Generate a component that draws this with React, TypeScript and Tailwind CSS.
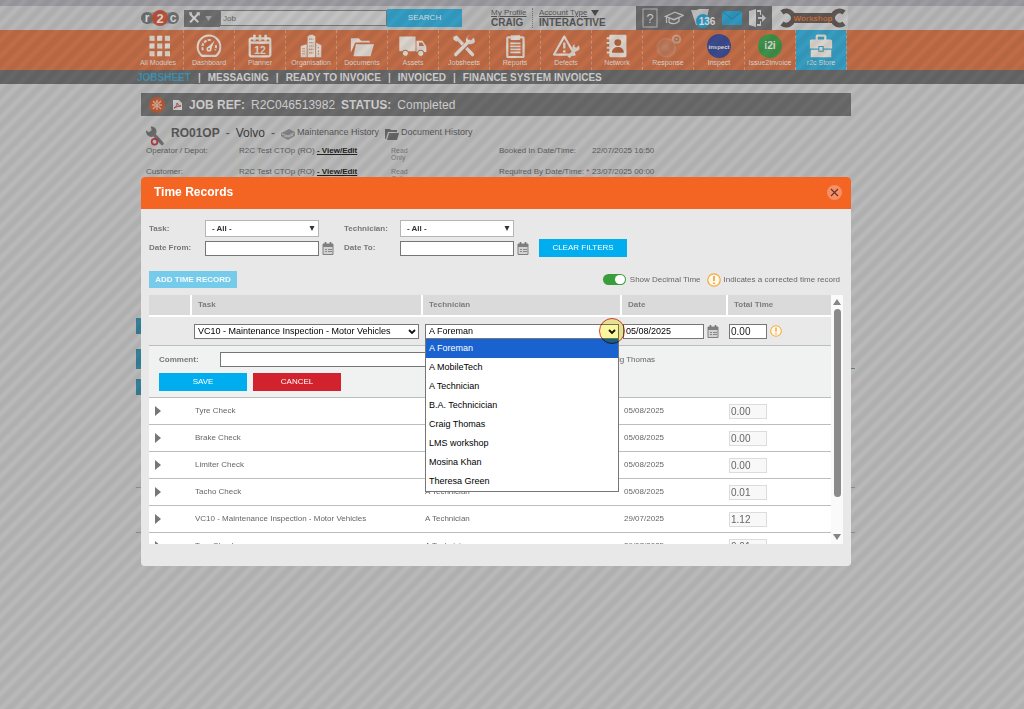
import React from "react";

type IconProps = { className?: string };

const INK = "#dad3cc";

function Svg({ children, box = "0 0 32 28", className = "h-6 w-8" }: { children: React.ReactNode; box?: string; className?: string }) {
  return (
    <svg viewBox={box} className={className} fill="none" aria-hidden="true">
      {children}
    </svg>
  );
}

function GridIcon() {
  return (
    <Svg>
      {[3, 12, 21].map((y) =>
        [6, 15, 24].map((x) => <rect key={`${x}-${y}`} x={x} y={y - 1} width="6" height="6" fill={INK} />)
      )}
    </Svg>
  );
}

function GaugeIcon() {
  return (
    <Svg>
      <path d="M8 25.5A13.2 13.2 0 1 1 24 25.5Z" stroke={INK} strokeWidth="2.400" />
      <path d="M9 19A8.500 8.500 0 0 1 19.500 7.500M24 13A8.500 8.500 0 0 1 23 19" stroke={INK} strokeWidth="2.400" strokeDasharray="3.500 1.300" />
      <path d="M14 16 22.500 7.500 18 19Z" fill={INK} />
      <circle cx="16" cy="17.500" r="3" fill={INK} />
      <circle cx="16" cy="17.500" r="1.200" fill="#b96d49" />
    </Svg>
  );
}

function PlannerIcon() {
  return (
    <Svg>
      <rect x="4" y="5" width="24" height="21" rx="2" stroke={INK} strokeWidth="2.600" />
      <path d="M4 10h24" stroke={INK} strokeWidth="3" />
      <path d="M9.500 1v7M16 1v7M22.500 1v7" stroke={INK} strokeWidth="3" />
      <text x="16" y="23" textAnchor="middle" fontSize="12" fontWeight="700" fontFamily="Liberation Sans, sans-serif" fill={INK}>12</text>
    </Svg>
  );
}

function BuildingsIcon() {
  return (
    <Svg>
      <path d="M4 27V14l7-2v15ZM12 27V3l3-2h3l3 2v24ZM22 27V10l6 3v14Z" fill={INK} />
      <path d="M6 17h3M6 20h3M6 23h3M14 6h5M14 10h5M14 14h5M14 18h5M14 22h5M24 16h2M24 20h2M24 23h2" stroke="#b96d49" strokeWidth="1.300" strokeDasharray="1.300 1" />
    </Svg>
  );
}

function FolderIcon() {
  return (
    <Svg>
      <path d="M3 22V5h9l3 3h10v2H8Z" fill={INK} />
      <path d="M9 12h21l-4 14H6Z" fill={INK} />
    </Svg>
  );
}

function TruckIcon() {
  return (
    <Svg>
      <path d="M0 3h19v17H0zM20 8h7l4.500 6v7H20Z" fill={INK} />
      <path d="M23 10h3.500l2.500 4h-6Z" fill="#b96d49" />
      <circle cx="7" cy="22.500" r="3.600" fill={INK} stroke="#b96d49" strokeWidth="1.200" />
      <circle cx="25" cy="22.500" r="3.600" fill={INK} stroke="#b96d49" strokeWidth="1.200" />
    </Svg>
  );
}

function ToolsIcon({ className }: IconProps) {
  return (
    <Svg className={className}>
      <path d="M7 4 26 24" stroke={INK} strokeWidth="4" strokeLinecap="round" />
      <path d="M4 2.500 9 4l1 3-3 2-3.500-3Z" fill={INK} />
      <path d="M6.500 24.500 22 9" stroke="#b96d49" strokeWidth="6" />
      <path d="M6.500 24 22 8.500" stroke={INK} strokeWidth="4" strokeLinecap="round" />
      <path d="M27.500 4 23.500 8l-3-1L20 3.500 23 1a7 7 0 0 0-4.500 9 7 7 0 0 0 10.500-1Z" fill={INK} />
    </Svg>
  );
}

function ReportIcon() {
  return (
    <Svg>
      <rect x="7" y="4" width="19" height="23" rx="1" stroke={INK} strokeWidth="2.600" />
      <path d="M11 1.500h11V7H11z" fill={INK} />
      <path d="M10.500 11h12M10.500 14.500h12M10.500 18h12M10.500 21.500h12" stroke={INK} strokeWidth="2" />
    </Svg>
  );
}

function DefectIcon() {
  return (
    <Svg>
      <path d="M14 3 26 24H2Z" stroke={INK} strokeWidth="2.600" strokeLinejoin="round" />
      <path d="M14 10v7M14 19v2.500" stroke={INK} strokeWidth="2.800" />
      <path d="m19 27 8-9" stroke={INK} strokeWidth="3.500" />
      <path d="m31 13-3 3-2-1v-3a5 5 0 0 0-2 7 5 5 0 0 0 8-2Z" fill={INK} />
    </Svg>
  );
}

function NetworkIcon() {
  return (
    <Svg>
      <rect x="7" y="1" width="20" height="26" rx="1.500" fill={INK} />
      <circle cx="17" cy="10" r="4" fill="#b0603c" />
      <path d="M10 22c0-9 14-9 14 0Z" fill="#b0603c" />
      <path d="M4 5h5M4 10.500h5M4 16h5M4 21.500h5" stroke={INK} strokeWidth="2.400" />
    </Svg>
  );
}

function ResponseIcon() {
  return (
    <Svg>
      <circle cx="14" cy="16" r="10.500" fill="#bd7555" stroke="#bb8165" strokeWidth="2" />
      <circle cx="14" cy="16" r="4" fill="#bb8165" />
      <circle cx="26" cy="6" r="5.500" fill="#c6987f" />
      <circle cx="26" cy="6" r="2.200" stroke="#a96444" strokeWidth="1.200" />
    </Svg>
  );
}

function RoundBadge({ fill, label, size }: { fill: string; label: string; size: string }) {
  return (
    <Svg>
      <circle cx="16" cy="14" r="14" fill={fill} />
      <text x="16" y="18" textAnchor="middle" fontSize={size} fontWeight="700" fontFamily="Liberation Sans, sans-serif" fill="#d9d6d6">{label}</text>
    </Svg>
  );
}

function CaseIcon() {
  return (
    <Svg>
      <path d="M11 7V3q0-1 1-1h8q1 0 1 1v4" stroke={INK} strokeWidth="2.600" />
      <path d="M5 6.500h22q2 0 2 2V17H3V8.500q0-2 2-2ZM4 18.500h24V27H4z" fill={INK} />
      <path d="M13.500 14.500h5v5.500h-5z" fill={INK} stroke="#3c94b4" strokeWidth="1.200" />
    </Svg>
  );
}

const modules: { label: string; icon: React.ReactNode }[] = [
  { label: "All Modules", icon: <GridIcon /> },
  { label: "Dashboard", icon: <GaugeIcon /> },
  { label: "Planner", icon: <PlannerIcon /> },
  { label: "Organisation", icon: <BuildingsIcon /> },
  { label: "Documents", icon: <FolderIcon /> },
  { label: "Assets", icon: <TruckIcon /> },
  { label: "Jobsheets", icon: <ToolsIcon /> },
  { label: "Reports", icon: <ReportIcon /> },
  { label: "Defects", icon: <DefectIcon /> },
  { label: "Network", icon: <NetworkIcon /> },
  { label: "Response", icon: <ResponseIcon /> },
  { label: "Inspect", icon: <RoundBadge fill="#3c4a8c" label="inspect" size="7" /> },
  { label: "Issue2Invoice", icon: <RoundBadge fill="#3f9048" label="i2i" size="12" /> },
  { label: "r2c Store", icon: <CaseIcon /> },
];

function Logo() {
  return (
    <svg viewBox="0 0 38 16" className="h-4 w-[38px] shrink-0" role="img" aria-label="r2c">
      <rect x="5" y="2.500" width="28" height="11" fill="#8a8a8a" />
      <circle cx="6" cy="8" r="6" fill="#6e6e6e" />
      <circle cx="32" cy="8" r="6" fill="#6e6e6e" />
      <circle cx="19" cy="8" r="8" fill="#b9533a" />
      <g fontFamily="Liberation Sans, sans-serif" fontWeight="700" fill="#d4d4d4" textAnchor="middle">
        <text x="6" y="12" fontSize="12">r</text>
        <text x="19" y="12.500" fontSize="13">2</text>
        <text x="32" y="11.500" fontSize="12">c</text>
      </g>
    </svg>
  );
}

function WorkshopLogo() {
  return (
    <svg viewBox="0 0 70 20" className="h-5 w-[70px]" role="img" aria-label="Workshop">
      <rect x="15" y="5" width="40" height="10" fill="#5d5652" />
      <path d="M4 4.500A7 7 0 1 1 4 15.500" transform="translate(0 0)" stroke="#5d5652" strokeWidth="5" fill="none" />
      <path d="M66 4.500A7 7 0 1 0 66 15.500" stroke="#5d5652" strokeWidth="5" fill="none" />
      <text x="35" y="13" textAnchor="middle" fontSize="8" fontWeight="700" fontFamily="Liberation Sans, sans-serif" fill="#c46b3a">Workshop</text>
    </svg>
  );
}

function TopBar() {
  return (
    <div className="bg-[#b7b7b7] pr-8">
      <div className="mx-auto flex h-6 max-w-[710px] items-center">
        <Logo />
        <button aria-label="Search type" className="ml-[5px] flex h-[17px] w-9 items-center justify-between bg-[#6d6d6d] px-1">
          <svg viewBox="0 0 14 14" className="h-3 w-3" aria-hidden="true">
            <path d="m2 2 10 10M2.500 12 12 2" stroke="#cfcfcf" strokeWidth="2.200" />
            <path d="M1 1h3v3M10 1h3v3" stroke="#cfcfcf" strokeWidth="1.500" fill="none" />
          </svg>
          <svg viewBox="0 0 8 6" className="mr-1 h-[5px] w-[7px]" aria-hidden="true"><path d="M0 0h8L4 6Z" fill="#a0a0a0" /></svg>
        </button>
        <input aria-label="Search" defaultValue="Job" className="h-4 w-[167px] border border-[#777] bg-[#c2c2c2] px-0.5 text-[8px] text-[#666]" />
        <button className="h-[18px] w-[75px] bg-[#359dc4] text-[8px] text-[#d5dde0]">SEARCH</button>
        <div className="ml-[29px] flex text-[10px] leading-[10px] text-[#555]">
          <div className="w-[42px] border-r border-dotted border-[#777]">
            <a href="#profile" className="block text-[8px] underline">My Profile</a>
            <div className="font-bold">CRAIG</div>
          </div>
          <div className="pl-[6px]">
            <a href="#account" className="flex items-center gap-1 text-[8px] leading-[10px]">
              <span className="underline">Account Type</span>
              <svg viewBox="0 0 8 6" className="h-[6px] w-2" aria-hidden="true"><path d="M0 0h8L4 6Z" fill="#4c4c4c" /></svg>
            </a>
            <div className="font-bold">INTERACTIVE</div>
          </div>
        </div>
        <div className="ml-auto flex h-6 w-[136px] shrink-0 items-center justify-between bg-[#696969] px-[6px]">
          <svg viewBox="0 0 16 20" className="h-5 w-4" aria-hidden="true">
            <rect x="1" y="1" width="14" height="18" fill="none" stroke="#b5b5b5" />
            <text x="8" y="15" textAnchor="middle" fontSize="13" fontFamily="Liberation Sans, sans-serif" fill="#cacaca">?</text>
          </svg>
          <svg viewBox="0 0 24 18" className="h-4 w-5" fill="none" stroke="#bdbdbd" strokeWidth="1.600" aria-hidden="true">
            <path d="M2 7 13 2l10 4-11 5ZM6 9.500V14c4 3 9 2 12-1V9M3 8v7" />
          </svg>
          <svg viewBox="0 0 25 20" className="h-5 w-[25px]" aria-hidden="true">
            <path d="M0 2h6l2-1h10l-4 16H5Z" fill="#bcbcbc" />
            <circle cx="12" cy="13" r="7" fill="#2f95bd" />
            <text x="16" y="17" textAnchor="middle" fontSize="10" fontWeight="700" fontFamily="Liberation Sans, sans-serif" fill="#d8d8d8">136</text>
          </svg>
          <svg viewBox="0 0 20 14" className="h-[14px] w-5" aria-hidden="true">
            <path d="M0 0h20v14H0Z" fill="#3197be" /><path d="m0 0 10 8L20 0" fill="none" stroke="#2a7fa0" />
          </svg>
          <svg viewBox="0 0 18 18" className="h-[18px] w-[18px]" aria-hidden="true">
            <path d="M1 2 8 0v18l-7-2ZM9 1h4v5h-1V3H9v12h3v-3h1v5H9Z" fill="#c5c5c5" />
            <path d="M10 8h4V5l4 4-4 4v-3h-4Z" fill="#c5c5c5" />
          </svg>
        </div>
        <div className="mr-[3px] flex h-6 w-[76px] shrink-0 items-center justify-end bg-[#c2c2c2]"><WorkshopLogo /></div>
      </div>
    </div>
  );
}

function ModuleNav() {
  return (
    <nav aria-label="Modules" className="bg-[#c06c47] pr-8">
      <div className="mx-auto max-w-[710px]">
        <div className="-mx-2 flex">
          {modules.map((m) => (
            <a
              key={m.label}
              href="#module"
              className={`flex h-10 w-[51px] flex-col items-center border-r border-dashed border-[#cb9378] pt-1 text-[7px] leading-[10px] whitespace-nowrap text-[#dcd3cd] ${m.label === "r2c Store" ? "bg-[#379cc0]" : ""}`}
            >
              {m.icon}
              {m.label}
            </a>
          ))}
        </div>
      </div>
    </nav>
  );
}

function SubNav() {
  const items = ["JOBSHEET", "MESSAGING", "READY TO INVOICE", "INVOICED", "FINANCE SYSTEM INVOICES"];
  return (
    <nav aria-label="Sections" className="bg-[#676767] pr-8">
      <div className="mx-auto max-w-[710px]">
        <div className="-ml-1 flex h-[14px] items-center gap-[7px] text-[10px] font-bold text-[#cfcfcf]">
          {items.map((item, i) => (
            <React.Fragment key={item}>
              {i > 0 && <span>|</span>}
              <a href="#section" className={i === 0 ? "text-[#3d93b3]" : ""}>{item}</a>
            </React.Fragment>
          ))}
        </div>
      </div>
    </nav>
  );
}

function JobRow({ label, operator, dateLabel, date, required }: { label: string; operator: string; dateLabel: string; date: string; required?: boolean }) {
  return (
    <div className="grid h-[21px] grid-cols-[93px_152px_108px_93px_1fr] pl-[5px] text-[8px] leading-[8px] text-[#5d5d5d]">
      <span>{label}</span>
      <span>{operator} <a href="#edit" className="font-bold text-[#222] underline">- View/Edit</a></span>
      <span className="w-5 text-[7px] leading-[7px] text-[#777]">Read Only</span>
      <span className="whitespace-nowrap">{dateLabel} {required && <span className="text-[#a33]">*</span>}</span>
      <span>{date}</span>
    </div>
  );
}

function JobPage() {
  return (
    <main className="pt-[9px] pr-8">
      <div className="mx-auto max-w-[710px]">
        <div className="flex h-[23px] items-center bg-[#6b6b6b] pl-2 text-[12px] text-[#d0d0d0]">
          <svg viewBox="0 0 16 16" className="h-4 w-4" aria-hidden="true">
            <circle cx="8" cy="8" r="8" fill="#b65a38" />
            <path d="m4 4 8 8M12 4l-8 8M8 3v3M8 10v3M3 8h3M10 8h3" stroke="#d5a68f" strokeWidth="1.500" />
          </svg>
          <svg viewBox="0 0 9 10" className="ml-2 h-[10px] w-[9px]" aria-hidden="true">
            <path d="M0 0h6l3 3v7H0Z" fill="#c9c9c9" /><path d="M1 8c3-1 3-4 3-5 1 2 2 3 4 3-3 0-5 1-7 2" fill="none" stroke="#a8483c" />
          </svg>
          <span className="ml-[7px] font-bold">JOB REF:</span>
          <span className="ml-[6px]">R2C046513982</span>
          <span className="ml-[6px] font-bold">STATUS:</span>
          <span className="ml-[6px]">Completed</span>
        </div>
        <div className="flex h-[30px] items-end pl-[5px] text-[12px] text-[#565656]">
          <svg viewBox="0 0 20 20" className="h-5 w-[19px]" aria-hidden="true">
            <path d="m8 8 9 10" stroke="#6c6c6c" strokeWidth="3.500" strokeLinecap="round" />
            <path d="M5 0 6 4 3 6 0 4a6 6 0 0 0 6 7 6 6 0 0 0 5-7 6 6 0 0 0-6-4Z" fill="#6c6c6c" />
            <circle cx="9" cy="16" r="3" fill="#c0c0c0" stroke="#b03a42" strokeWidth="1.800" />
          </svg>
          <span className="ml-[6px] pb-1 font-bold">RO01OP</span>
          <span className="ml-[6px] pb-1">-</span>
          <span className="ml-[6px] pb-1 text-[#3c3c3c]">Volvo</span>
          <span className="mx-[6px] pb-1">-</span>
          <svg viewBox="0 0 14 12" className="mb-[6px] h-3 w-[14px]" aria-hidden="true">
            <path d="m0 5 8-4 6 3v4l-7 4-7-4Z" fill="#858585" /><path d="m1 6 6 2 6-3M3 8l4 1 5-2" stroke="#b8b8b8" fill="none" />
          </svg>
          <a href="#history" className="ml-[2px] pb-2 text-[9px] leading-[12px]">Maintenance History</a>
          <svg viewBox="0 0 14 12" className="mb-[6px] ml-[6px] h-3 w-[14px]" aria-hidden="true">
            <path d="M0 1h5l1 1h6v2H3L1 11H0ZM4 5h10l-2 7H2Z" fill="#666" />
          </svg>
          <a href="#documents" className="ml-[2px] pb-2 text-[9px] leading-[12px]">Document History</a>
        </div>
        <div className="pt-px">
          <JobRow label="Operator / Depot:" operator="R2C Test CTOp (RO)" dateLabel="Booked In Date/Time:" date="22/07/2025 16:50" />
          <JobRow label="Customer:" operator="R2C Test CTOp (RO)" dateLabel="Required By Date/Time:" date="23/07/2025 00:00" required />
        </div>
        <div className="-mr-[4px] -ml-[5px] pt-[129px]">
          <div className="h-4 w-6 bg-[#367f97]" />
          <div className="mt-[15px] h-5 border-b border-[#5f7f8a]"><div className="h-5 w-6 bg-[#367f97]" /></div>
          <div className="mt-[10px] h-4 w-6 bg-[#367f97]" />
          <div className="mt-[92px] border-t border-[#929292]" />
          <div className="mt-[44px] border-t border-[#929292]" />
        </div>
      </div>
    </main>
  );
}

function CalendarButton({ label }: { label: string }) {
  return (
    <button aria-label={label} className="h-[13px] w-3 shrink-0">
      <svg viewBox="0 0 12 13" className="h-[13px] w-3" aria-hidden="true">
        <path d="M1 2h10v10.500H1Z" fill="#d2d2d2" stroke="#808080" />
        <path d="M1 2h10v3H1Z" fill="#808080" />
        <path d="M3.500 0v3M8.500 0v3" stroke="#777" strokeWidth="1.600" />
        <path d="M3 7.500h2M6 7.500h4M3 9.500h2M6 9.500h4" stroke="#888" />
      </svg>
    </button>
  );
}

function WarningIcon({ className }: IconProps) {
  return (
    <svg viewBox="0 0 14 14" className={className} fill="none" aria-hidden="true">
      <circle cx="7" cy="7" r="6.200" fill="#fff8e8" stroke="#f3a93c" strokeWidth="1.200" />
      <path d="M7 3v5M7 9.500V11" stroke="#ee9a25" strokeWidth="1.500" />
    </svg>
  );
}

function FilterSelect({ id }: { id: string }) {
  return (
    <div className="relative">
      <select id={id} className="block h-[17px] w-full appearance-none border border-[#b5b5b5] bg-white px-[6px] text-[8px] font-bold text-[#333]">
        <option>- All -</option>
      </select>
      <svg viewBox="0 0 6 5" className="pointer-events-none absolute top-[6px] right-1 h-[5px] w-[6px]" aria-hidden="true"><path d="M0.500 0h5L3 5Z" fill="#333" /></svg>
    </div>
  );
}

function Chevron() {
  return (
    <svg viewBox="0 0 8 6" className="pointer-events-none absolute top-[5px] right-[3px] h-[6px] w-2" fill="none" aria-hidden="true">
      <path d="m1 1 3 3 3-3" stroke="#111" strokeWidth="1.800" />
    </svg>
  );
}

const technicians = ["A Foreman", "A MobileTech", "A Technician", "B.A. Technicician", "Craig Thomas", "LMS workshop", "Mosina Khan", "Theresa Green"];

const records = [
  { task: "Tyre Check", tech: "A Technician", date: "05/08/2025", total: "0.00" },
  { task: "Brake Check", tech: "A Technician", date: "05/08/2025", total: "0.00" },
  { task: "Limiter Check", tech: "A Technician", date: "05/08/2025", total: "0.00" },
  { task: "Tacho Check", tech: "A Technician", date: "05/08/2025", total: "0.01" },
  { task: "VC10 - Maintenance Inspection - Motor Vehicles", tech: "A Technician", date: "29/07/2025", total: "1.12" },
  { task: "Tyre Check", tech: "A Technician", date: "29/07/2025", total: "0.01" },
];

const field = "block h-[15px] w-full border border-[#767676] bg-white text-[9px] text-black";

function RecordsTable() {
  return (
    <table className="w-full table-fixed border-separate border-spacing-0 text-left text-[8px] text-[#666]">
      <colgroup>
        <col className="w-[43px]" />
        <col />
        <col className="w-[199px]" />
        <col className="w-[106px]" />
        <col className="w-[103px]" />
      </colgroup>
      <thead>
        <tr>
          {["", "Task", "Technician", "Date", "Total Time"].map((h) => (
            <th key={h} className="h-[22px] border-r-2 border-b-2 border-white bg-[#dadada] p-0 pl-[6px] font-bold text-[#7c7c7c] last:border-r-0">{h}</th>
          ))}
        </tr>
      </thead>
      <tbody>
        <tr className="bg-[#e9e9e9]">
          <td className="h-[29px] border-b border-[#bdbdbd] p-0" />
          <td className="border-b border-[#bdbdbd] py-0 pr-1 pl-[2px]">
            <div className="relative">
              <select aria-label="Task" className={`${field} appearance-none pl-[3px]`}>
                <option>VC10 - Maintenance Inspection - Motor Vehicles</option>
              </select>
              <Chevron />
            </div>
          </td>
          <td className="border-b border-[#bdbdbd] py-0 pr-[3px] pl-[2px]">
            <div className="relative">
              <select aria-label="Technician" className={`${field} appearance-none pl-[3px]`}>
                {technicians.map((t) => <option key={t}>{t}</option>)}
              </select>
              <Chevron />
              <ul role="listbox" aria-label="Technician options" className="absolute top-[15px] left-0 z-10 w-full border border-t-0 border-[#767676] bg-white text-[9px] leading-[19px] text-black">
                {technicians.map((t, i) => (
                  <li key={t} role="option" aria-selected={i === 0} className={`pl-[3px] ${i === 0 ? "bg-[#1a62cf] text-white" : ""}`}>{t}</li>
                ))}
              </ul>
              <span className="pointer-events-none absolute -top-[6px] -right-[6px] z-20 h-[26px] w-[26px] rounded-full border border-[#d8432f] bg-[#fbf7a0] mix-blend-multiply" />
            </div>
          </td>
          <td className="border-b border-[#bdbdbd] py-0 pr-0 pl-px">
            <div className="flex items-center gap-[3px]">
              <input aria-label="Date" defaultValue="05/08/2025" className="h-[15px] w-[81px] border border-[#767676] bg-white pl-[2px] text-[9px] text-black" />
              <CalendarButton label="Choose date" />
            </div>
          </td>
          <td className="border-b border-[#bdbdbd] py-0 pr-0 pl-px">
            <div className="flex items-center gap-[3px]">
              <input aria-label="Total time" defaultValue="0.00" className="h-[15px] w-[38px] border border-[#767676] bg-white pl-px text-[10px] text-[#222]" />
              <WarningIcon className="h-3 w-3" />
            </div>
          </td>
        </tr>
        <tr className="bg-[#f0f2f1]">
          <td colSpan={5} className="h-[52px] border-b border-[#bdbdbd] p-0 pl-[10px] align-top">
            <div className="flex items-center pt-[6px]">
              <label htmlFor="comment" className="w-[61px] font-bold text-[#777]">Comment:</label>
              <input id="comment" className="h-[15px] flex-1 border border-[#767676] bg-white" />
              <span className="w-[226px]">Craig Thomas</span>
            </div>
            <div className="mt-[6px] flex gap-[6px] text-white">
              <button className="h-[18px] w-[88px] bg-[#00aeef]">SAVE</button>
              <button className="h-[18px] w-[88px] bg-[#d2222e]">CANCEL</button>
            </div>
          </td>
        </tr>
        {records.map((r, i) => (
          <tr key={i} className="bg-white">
            <td className="h-[27px] border-b border-[#bdbdbd] p-0 pl-[6px]">
              <button aria-label={`Expand ${r.task}`} className="block">
                <svg viewBox="0 0 6 10" className="h-[10px] w-[6px]" aria-hidden="true"><path d="M0 0 6 5 0 10Z" fill="#777" /></svg>
              </button>
            </td>
            <td className="border-b border-[#bdbdbd] p-0 pl-[3px]">{r.task}</td>
            <td className="border-b border-[#bdbdbd] p-0 pl-[2px]">{r.tech}</td>
            <td className="border-b border-[#bdbdbd] p-0 pl-[2px]">{r.date}</td>
            <td className="border-b border-[#bdbdbd] p-0 pl-px">
              <input aria-label={`Total time ${i + 1}`} readOnly value={r.total} className="block h-[15px] w-[38px] border border-[#dcdcdc] bg-[#f8f8f8] pl-px text-[10px] text-[#666]" />
            </td>
          </tr>
        ))}
      </tbody>
    </table>
  );
}

function ScrollTrack() {
  return (
    <div className="flex w-3 shrink-0 flex-col items-center bg-[#fafafa] py-1" aria-hidden="true">
      <svg viewBox="0 0 8 6" className="h-[6px] w-2"><path d="M4 0 8 6H0Z" fill="#858585" /></svg>
      <div className="mt-1 h-[188px] w-[7px] rounded-full bg-[#8a8a8a]" />
      <svg viewBox="0 0 8 6" className="mt-auto h-[6px] w-2"><path d="M0 0h8L4 6Z" fill="#858585" /></svg>
    </div>
  );
}

function TimeRecordsDialog() {
  return (
    <div role="dialog" aria-labelledby="dialog-title" className="w-full max-w-[710px] overflow-hidden rounded-[4px] bg-[#e8e8e8]">
      <header className="flex h-8 items-center justify-between bg-[#f46524] pr-[9px] pb-[2px] pl-[13px]">
        <h1 id="dialog-title" className="text-[12px] font-bold text-white">Time Records</h1>
        <button aria-label="Close" className="h-[15px] w-[15px]">
          <svg viewBox="0 0 15 15" className="h-[15px] w-[15px]" aria-hidden="true">
            <circle cx="7.500" cy="7.500" r="7.500" fill="#f59069" />
            <path d="m4 4 7 7m0-7-7 7" stroke="#6b3422" strokeWidth="1.200" />
          </svg>
        </button>
      </header>
      <div className="px-2 pt-[11px] pb-[22px] text-[8px] text-[#666]">
        <div className="grid grid-cols-[56px_114px_25px_56px_114px_25px_88px] grid-rows-[17px_18px] items-center gap-y-[2px] font-bold text-[#777]">
          <label htmlFor="task">Task:</label>
          <FilterSelect id="task" />
          <span />
          <label htmlFor="technician">Technician:</label>
          <FilterSelect id="technician" />
          <span className="col-span-2" />
          <label htmlFor="from">Date From:</label>
          <input id="from" className="h-[15px] w-full border border-[#767676] bg-white" />
          <div className="flex pl-[3px]"><CalendarButton label="Choose start date" /></div>
          <label htmlFor="to">Date To:</label>
          <input id="to" className="h-[15px] w-full border border-[#767676] bg-white" />
          <div className="flex pl-[3px]"><CalendarButton label="Choose end date" /></div>
          <button className="h-[18px] bg-[#00aeef] font-normal text-white">CLEAR FILTERS</button>
        </div>
        <div className="mt-[14px] flex h-[17px] items-center">
          <button className="h-[17px] w-[88px] bg-[#76cbea] font-bold text-[#f2fafd]">ADD TIME RECORD</button>
          <label className="ml-auto flex items-center gap-1">
            <input type="checkbox" role="switch" defaultChecked className="h-[11px] w-[23px] appearance-none rounded-full bg-[#3a9d3c] before:mt-px before:ml-3 before:block before:h-[9px] before:w-[10px] before:rounded-full before:bg-white" />
            Show Decimal Time
          </label>
          <WarningIcon className="mr-[3px] ml-[6px] h-[14px] w-[14px]" />
          <span className="pr-[3px]">Indicates a corrected time record</span>
        </div>
        <div className="mt-[7px] flex h-[249px] overflow-hidden bg-white">
          <div className="min-w-0 flex-1 bg-white"><RecordsTable /></div>
          <ScrollTrack />
        </div>
      </div>
    </div>
  );
}

export default function App() {
  return (
    <div className="min-h-screen bg-[#b9b9b9] font-['Liberation_Sans',Arial,sans-serif]">
      <div className="h-[6px] bg-[#9c9ba1]" />
      <TopBar />
      <ModuleNav />
      <SubNav />
      <JobPage />
      <div className="fixed inset-0 bg-[repeating-linear-gradient(135deg,rgba(0,0,0,0.05)_0px,rgba(0,0,0,0.05)_3px,rgba(0,0,0,0)_6px,rgba(0,0,0,0)_8px,rgba(0,0,0,0.05)_11px)]" />
      <div className="fixed inset-0 flex items-start justify-center overflow-auto pt-[177px] pr-8">
        <TimeRecordsDialog />
      </div>
    </div>
  );
}
